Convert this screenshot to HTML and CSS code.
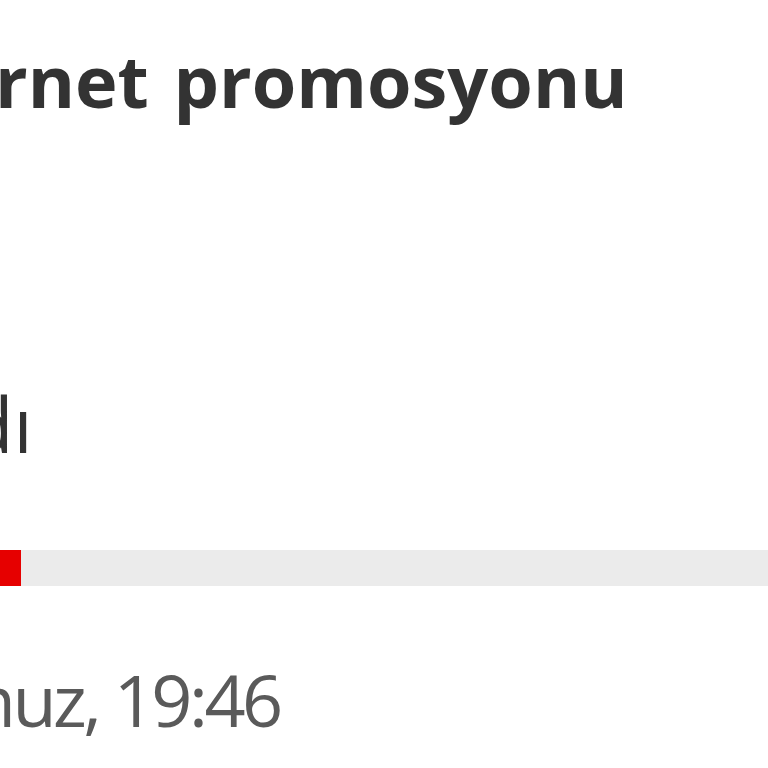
FILE: index.html
```html
<!DOCTYPE html>
<html lang="tr">
<head>
<meta charset="utf-8">
<link rel="stylesheet" href="styles.css">
</head>
<body>
<div class="viewport">
  <div class="card">
    <h1 class="title">İnternet promosyonu</h1>
    <p class="status">Kaldı</p>
    <div class="progress"><div class="progress-fill" style="width: 162px"></div></div>
    <p class="date">Temmuz, 19:46</p>
  </div>
</div>
</body>
</html>
```

FILE: styles.css
```css
html, body {
  margin: 0;
  padding: 0;
  background: #ffffff;
  width: 768px;
  height: 768px;
  overflow: hidden;
}
.viewport {
  width: 768px;
  height: 768px;
  overflow: hidden;
}
.card {
  margin-left: -141px;
  width: 1200px;
  padding-top: 44px;
  font-family: "Open Sans", "Noto Sans", sans-serif;
  white-space: nowrap;
}
.title {
  margin: 0;
  font-size: 72px;
  font-weight: 700;
  color: #333333;
  line-height: 1;
  text-indent: -9px;
  word-spacing: 6px;
}
.status {
  margin: 269.5px 0 0 0;
  font-size: 76px;
  font-weight: 400;
  color: #333333;
  line-height: 1;
}
.progress {
  margin-top: 88.5px;
  height: 36px;
  background: #ebebeb;
  width: 1200px;
}
.progress-fill {
  height: 100%;
  background: #e60000;
}
.date {
  margin: 77px 0 0 0;
  font-size: 72px;
  letter-spacing: -3.5px;
  text-indent: -46px;
  color: #5a5a5a;
  line-height: 1;
}
```
